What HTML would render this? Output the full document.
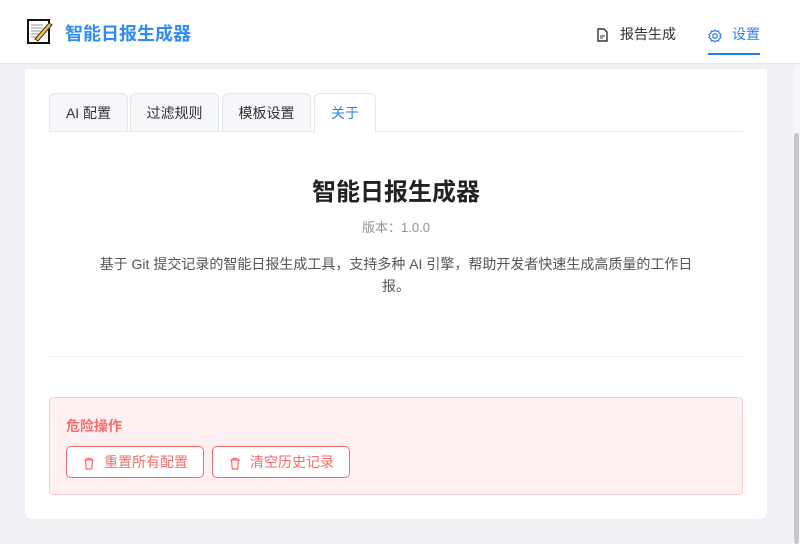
<!DOCTYPE html>
<html><head><meta charset="utf-8"><style>
*{box-sizing:border-box;margin:0;padding:0}
body{width:800px;height:544px;overflow:hidden;background:#f0f1f4;font-family:"Liberation Sans","Noto Sans CJK SC",sans-serif;position:relative}
.hdr{position:absolute;left:0;top:0;width:800px;height:64px;background:#fff;border-bottom:1px solid #e4e6eb}
.logo{position:absolute;left:27px;top:18px}
.brand{position:absolute;left:65px;top:20px;font-size:18px;font-weight:bold;color:#2f8cf5}
.nav1{position:absolute;left:596px;top:24px;font-size:14px;color:#303133}
.nav2{position:absolute;left:708px;top:24px;font-size:14px;color:#2f7df5}
.ul{position:absolute;left:708px;top:53px;width:52px;height:2px;background:#1f7ef5}
.card{position:absolute;left:25px;top:68px;width:742px;height:451px;background:#fff;border-radius:0 0 8px 8px;border-top:1px solid #ececec}
.tabline{position:absolute;left:24px;top:62px;width:694px;height:1px;background:#e4e7ed}
.tab{position:absolute;top:24px;height:39px;background:#f5f7fa;border:1px solid #e4e7ed;border-bottom:none;border-radius:6px 6px 0 0;font-size:14px;color:#303133;text-align:center;line-height:38px}
.tab.a{background:#fff;color:#2f7df5;height:40px}
.t{position:absolute;left:0;width:742px;text-align:center}
.danger{position:absolute;left:24px;top:328px;width:694px;height:98px;background:#fef0f0;border:1px solid #fbcaca;border-radius:4px}
.btn{position:absolute;top:48px;height:32px;border:1px solid #f56c6c;border-radius:5px;background:#fff;color:#f56c6c;font-size:14px;line-height:30px}
.sb{position:absolute;left:793px;top:65px;width:7px;height:479px;background:#f7f7f7}
.th{position:absolute;left:794px;top:133px;width:5px;height:411px;background:#c8c8c8;border-radius:3px}
</style></head><body>
<div class="hdr">
<svg class="logo" width="26" height="26" viewBox="0 0 26 26"><rect x="1" y="2" width="21" height="23" fill="#fff" stroke="#111" stroke-width="2"/><g stroke="#999" stroke-width="1"><line x1="4" y1="7" x2="16" y2="7"/><line x1="4" y1="10" x2="16" y2="10"/><line x1="4" y1="13" x2="14" y2="13"/><line x1="4" y1="16" x2="12" y2="16"/><line x1="4" y1="19" x2="10" y2="19"/></g><path d="M8 21 L22 5 L25 7 L11 23 Z" fill="#f5c242" stroke="#333" stroke-width="1"/></svg>
<div class="brand">智能日报生成器</div>
<svg style="position:absolute;left:597px;top:28px" width="11" height="14" viewBox="0 0 11 14"><path d="M1 1h6l3 3v9H1z" fill="none" stroke="#333" stroke-width="1.4"/><path d="M3 8h5M3 10h3" stroke="#333"/></svg>
<div class="nav1" style="left:620px">报告生成</div>
<svg style="position:absolute;left:708px;top:29px" width="14" height="14" viewBox="0 0 14 14"><circle cx="7" cy="7" r="2.2" fill="none" stroke="#2f7df5" stroke-width="1.3"/><path d="M7 1l1.5 1.5 2-.5.5 2L13 5.5 12 7l1 1.5-2 1.5-.5 2-2-.5L7 13l-1.5-1.5-2 .5-.5-2L1 8.5 2 7 1 5.5 3 4l.5-2 2 .5z" fill="none" stroke="#2f7df5" stroke-width="1.2"/></svg>
<div class="nav2" style="left:732px">设置</div>
<div class="ul"></div>
</div>
<div class="card">
<div class="tab" style="left:24px;width:79px">AI 配置</div>
<div class="tab" style="left:105px;width:89px">过滤规则</div>
<div class="tab" style="left:197px;width:89px">模板设置</div>
<div class="tabline"></div>
<div class="tab a" style="left:289px;width:62px">关于</div>
<div class="t" style="top:103px;font-size:24px;font-weight:bold;color:#222">智能日报生成器</div>
<div class="t" style="top:148px;font-size:13px;color:#909399">版本：1.0.0</div>
<div style="position:absolute;left:70px;width:602px;top:184px;font-size:14px;line-height:22px;color:#555;text-align:center">基于 Git 提交记录的智能日报生成工具，支持多种 AI 引擎，帮助开发者快速生成高质量的工作日报。</div>
<div style="position:absolute;left:24px;top:287px;width:694px;height:1px;background:#ebeef5"></div>
<div class="danger">
<div style="position:absolute;left:16px;top:18px;font-size:14px;font-weight:bold;color:#f56c6c">危险操作</div>
<div class="btn" style="left:16px;width:138px"><svg style="position:absolute;left:16px;top:10px" width="12" height="13" viewBox="0 0 12 13"><path d="M1 3h10M4 3V1.5h4V3M2.5 3l.8 9h5.4l.8-9" fill="none" stroke="#f56c6c" stroke-width="1.2"/></svg><span style="position:absolute;left:37px">重置所有配置</span></div>
<div class="btn" style="left:162px;width:138px"><svg style="position:absolute;left:16px;top:10px" width="12" height="13" viewBox="0 0 12 13"><path d="M1 3h10M4 3V1.5h4V3M2.5 3l.8 9h5.4l.8-9" fill="none" stroke="#f56c6c" stroke-width="1.2"/></svg><span style="position:absolute;left:37px">清空历史记录</span></div>
</div>
</div>
<div class="sb"></div><div class="th"></div>
</body></html>
